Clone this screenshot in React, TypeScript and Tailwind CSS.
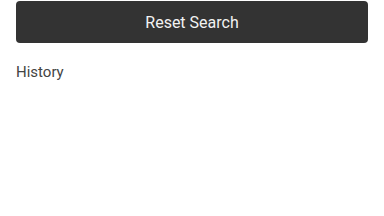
const App = () => (
  <div className="w-[384px] h-[216px] bg-white px-4 pt-px" style={{ fontFamily: "Roboto, sans-serif" }}>
    <button className="w-full h-[42px] rounded-[4px] bg-[#333333] text-[#f2f2f2] text-[16px] flex items-center justify-center pt-px">
      Reset Search
    </button>
    <div className="mt-[19px] text-[15px] text-[#444444] leading-[20px]">History</div>
  </div>
);

export default App;
